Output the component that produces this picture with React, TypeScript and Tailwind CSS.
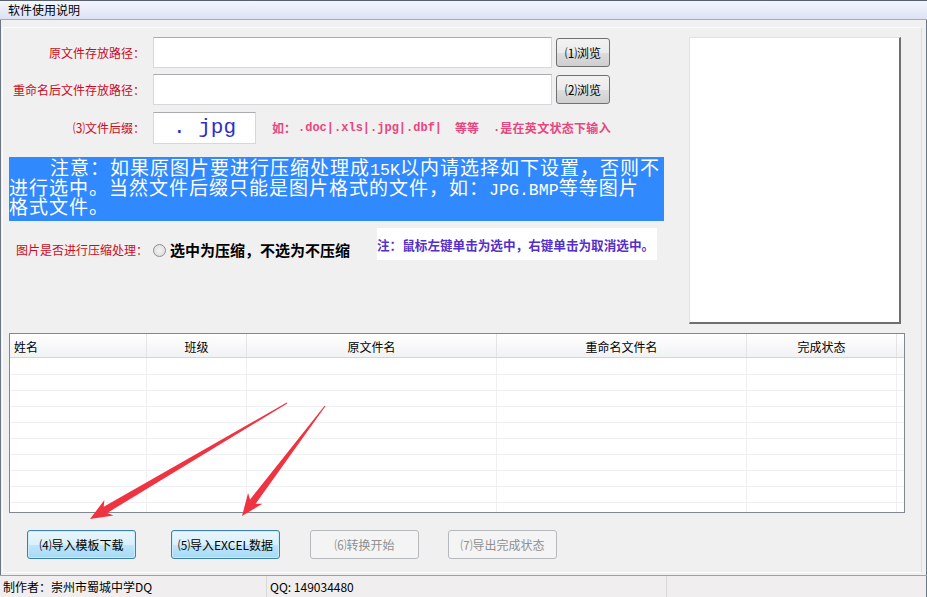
import React from 'react';

const cjk = "font-['Noto_Sans_CJK_SC',sans-serif]";
const mono = "font-['Liberation_Mono','Noto_Sans_CJK_SC',monospace]";

function PathRow({ label, btn, top }: { label: string; btn: string; top: string }) {
  return (
    <div className={`flex items-center h-[31px] ${top}`}>
      <div className="w-[144px] pr-[8px] text-right text-[12px] text-[#cc0a24]">{label}</div>
      <div className="w-[399px] h-[31px] bg-white border border-[#d5d9df] border-t-[#a9abb1]" />
      <button
        type="button"
        className="ml-[4px] w-[54px] h-[29px] rounded-[3px] border border-[#707070] bg-[linear-gradient(#f2f2f2_0%,#ebebeb_50%,#dddddd_51%,#cfcfcf_100%)] text-[12px] text-black"
      >
        {btn}
      </button>
    </div>
  );
}

function ActionButton({ label, disabled }: { label: string; disabled?: boolean }) {
  return (
    <button
      type="button"
      className={
        disabled
          ? 'w-[109px] h-[29px] rounded-[3px] border border-[#b6b9bc] bg-[#f4f4f4] text-[12px] text-[#8f8f8f]'
          : 'w-[109px] h-[29px] rounded-[3px] border border-[#3c7fb1] bg-[linear-gradient(#eaf6fd_0%,#d9f0fc_50%,#bee6fd_51%,#a7d9f5_100%)] text-[12px] text-black shadow-[inset_0_0_0_1px_#c9ecfc]'
      }
    >
      {label}
    </button>
  );
}

const cols = [
  { name: '姓名', w: 'w-[137px]', left: true },
  { name: '班级', w: 'w-[100px]' },
  { name: '原文件名', w: 'w-[250px]' },
  { name: '重命名文件名', w: 'w-[250px]' },
  { name: '完成状态', w: 'w-[150px]' },
];

function Arrows() {
  return (
    <svg className="absolute left-0 top-0 pointer-events-none" width="927" height="597">
      <polygon
        fill="#ef3340"
        points="286.75,402.57 103.73,506.85 104.39,500.08 90,519 113.53,515.6 107.29,512.89 287.25,403.43"
      />
      <polygon
        fill="#ef3340"
        points="324.6,405.7 250.05,499.52 248.07,493.02 242,516 262.43,503.86 255.63,503.74 325.4,406.3"
      />
    </svg>
  );
}

export default function App() {
  return (
    <div className={`relative w-[927px] h-[597px] overflow-hidden flex flex-col bg-[#f0f0f0] ${cjk}`}>
      {/* title strip */}
      <div className="h-[20px] shrink-0 border-t border-b border-t-[#56606e] border-b-[#a4abbb] bg-linear-to-b from-[#f4f6fc] to-[#dde2f3] pl-[8px] text-[12px] leading-[17px] text-black">
        软件使用说明
      </div>

      <div className="flex-1 min-h-0 border-l border-r border-[#6b7584] pl-[1px] pr-[4px] pt-[7px] pb-[2px]">
        <div className="h-full border border-[#fbfbfb] border-r-[#dcdcdc] border-b-[#fdfdfd] pl-[6px] pt-[9px]">
          <div className="flex">
            <div className="w-[655px]">
              <PathRow label="原文件存放路径：" btn="⑴浏览" top="" />
              <PathRow label="重命名后文件存放路径：" btn="⑵浏览" top="mt-[6px]" />

              <div className="flex items-center h-[32px] mt-[7px]">
                <div className="w-[144px] pr-[8px] text-right text-[12px] text-[#cc0a24]">⑶文件后缀：</div>
                <div className="w-[103px] h-[32px] bg-white border border-[#d5d9df] border-t-[#a9abb1] flex items-center justify-center">
                  <span className="font-['Liberation_Mono',monospace] text-[21px] text-[#2f2fc8]">. jpg</span>
                </div>
                <div className="ml-[16px] text-[12px] font-bold text-[#e8467f] flex items-center">
                  <span>如：</span>
                  <span className={`${mono} ml-[2px]`}>.doc|.xls|.jpg|.dbf|</span>
                  <span className="ml-[13px]">等等</span>
                  <span className={`${mono} ml-[14px]`}>.</span>
                  <span className="tracking-[0.3px]">是在英文状态下输入</span>
                </div>
              </div>

              <div className="mt-[13px] h-[64px] bg-[#3189fe] text-white text-[19px] tracking-[1px] leading-[19.5px] whitespace-nowrap">
                <div className="h-[19.5px] pl-[41px]">
                  注意：如果原图片要进行压缩处理成<span className="font-['Liberation_Mono',monospace] text-[16.6px] tracking-normal leading-[0]">15K</span>以内请选择如下设置，否则不
                </div>
                <div className="h-[19.5px]">
                  进行选中。当然文件后缀只能是图片格式的文件，如：<span className="font-['Liberation_Mono',monospace] text-[16.6px] tracking-normal leading-[0]">JPG.BMP</span>等等图片
                </div>
                <div className="h-[19.5px]">格式文件。</div>
              </div>

              <div className="mt-[7px] h-[32px] flex">
                <div className="self-end h-[20px] flex items-center pl-[7px]">
                  <span className="text-[12px] text-[#cc0a24]">图片是否进行压缩处理：</span>
                  <span className="ml-[5px] w-[13px] h-[13px] rounded-full border border-[#8e8f8f] bg-[radial-gradient(circle,#f4f4f4_0%,#d8d8d8_100%)]" />
                  <span className="ml-[4px] text-[15px] font-bold text-black">选中为压缩，不选为不压缩</span>
                </div>
                <div className="ml-auto mr-[7px] w-[280px] h-[32px] bg-white pt-[8px] text-[12.6px] leading-[17px] font-bold text-[#5530c8] whitespace-nowrap">
                  注：鼠标左键单击为选中，右键单击为取消选中。
                </div>
              </div>
            </div>

            <div className="ml-[25px] w-[212px] h-[287px] bg-white border-t border-l border-[#e2e2e2] border-r-2 border-b-2 border-r-[#6f6f6f] border-b-[#6f6f6f]" />
          </div>

          {/* list view */}
          <div className="mt-[9px] w-[896px] h-[180px] border border-[#828790] bg-white overflow-hidden">
            <div className="flex h-[24px] border-b border-[#d5d5d5] bg-linear-to-b from-[#ffffff] to-[#f1f2f4]">
              {cols.map((c) => (
                <div
                  key={c.name}
                  className={`${c.w} h-full border-r border-[#e3e4e6] text-[12px] text-black flex items-center pt-[2px] ${
                    c.left ? 'pl-[4px]' : 'justify-center'
                  }`}
                >
                  {c.name}
                </div>
              ))}
              <div className="flex-1" />
            </div>
            {Array.from({ length: 10 }).map((_, i) => (
              <div key={i} className={`flex ${i === 0 ? 'h-[17px]' : 'h-[16px]'} border-b border-[#f0f0f0]`}>
                {cols.map((c) => (
                  <div key={c.name} className={`${c.w} h-full border-r border-[#f0f0f0]`} />
                ))}
              </div>
            ))}
          </div>

          <div className="mt-[17px] ml-[18px] flex">
            <ActionButton label="⑷导入模板下载" />
            <div className="ml-[35px]">
              <ActionButton label="⑸导入EXCEL数据" />
            </div>
            <div className="ml-[30px]">
              <ActionButton label="⑹转换开始" disabled />
            </div>
            <div className="ml-[29px]">
              <ActionButton label="⑺导出完成状态" disabled />
            </div>
          </div>
        </div>
      </div>

      {/* status bar */}
      <div className="h-[22px] shrink-0 border-t border-[#a0a0a0] bg-[#f0eeee] flex text-[12px] text-black leading-[21px]">
        <div className="w-[267px] border-r border-[#d9d6d6] pl-[3px]">制作者：崇州市蜀城中学DQ</div>
        <div className="w-[400px] border-r border-[#d9d6d6] pl-[3px]">QQ: 149034480</div>
        <div className="flex-1 border-r border-[#6b7584]" />
      </div>

      <Arrows />
    </div>
  );
}
